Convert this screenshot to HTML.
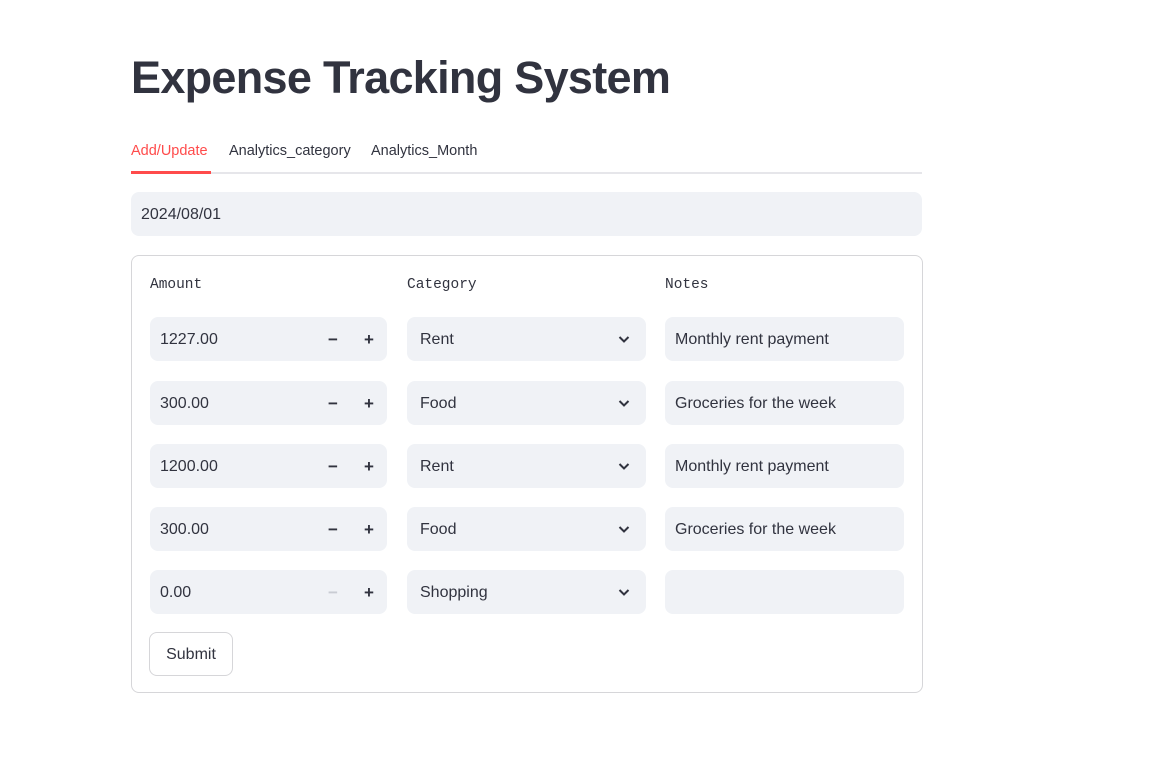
<!DOCTYPE html><html><head><style>
body{margin:0;background:#fff;width:1176px;height:776px;position:relative;font-family:"Liberation Sans",sans-serif;color:#31333f;overflow:hidden}
.a{position:absolute}
h1{position:absolute;left:131px;top:52px;margin:0;font-size:45px;font-weight:700;letter-spacing:-0.7px;color:#31333f}
.tab{position:absolute;top:143px;font-size:14.5px}
.in{position:absolute;background:#f0f2f6;border-radius:8px;height:44px;font-size:16px;line-height:46px;box-sizing:border-box;padding-left:10px}
.lbl{position:absolute;top:277px;font-family:"Liberation Mono",monospace;font-size:14.5px}
.pm{position:absolute;top:0;font-size:17px;font-weight:700}
</style></head><body>
<h1>Expense Tracking System</h1>
<div class="tab" style="left:131px;color:#ff4b4b">Add/Update</div>
<div class="tab" style="left:229px">Analytics_category</div>
<div class="tab" style="left:371px">Analytics_Month</div>
<div class="a" style="left:131px;top:172px;width:791px;height:2px;background:#e6e6ea"></div>
<div class="a" style="left:131px;top:171px;width:80px;height:3px;background:#ff4b4b"></div>
<div class="in" style="left:131px;top:192px;width:791px">2024/08/01</div>
<div class="a" style="left:131px;top:255px;width:790px;height:436px;border:1px solid #d6d6d9;border-radius:8px"></div>
<div class="lbl" style="left:150px">Amount</div>
<div class="lbl" style="left:407px">Category</div>
<div class="lbl" style="left:665px">Notes</div>
<div id="rows"></div>
<script>
var d=[["1227.00","Rent","Monthly rent payment"],["300.00","Food","Groceries for the week"],["1200.00","Rent","Monthly rent payment"],["300.00","Food","Groceries for the week"],["0.00","Shopping",""]];
var tops=[317,381,444,507,570],h="";
d.forEach(function(r,i){var t=tops[i];
h+='<div class="in" style="left:150px;top:'+t+'px;width:237px">'+r[0]+'<span class="pm" style="left:178px;color:'+(i==4?'#c9ccd3':'#31333f')+'">−</span><span class="pm" style="left:214px">+</span></div>';
h+='<div class="in" style="left:407px;top:'+t+'px;width:239px;padding-left:13px">'+r[1]+'<svg class="a" style="left:211px;top:18px" width="12" height="10" viewBox="0 0 12 10"><path d="M1.5 2l4.5 4.5 4.5-4.5" fill="none" stroke="#31333f" stroke-width="2"/></svg></div>';
h+='<div class="in" style="left:665px;top:'+t+'px;width:239px">'+r[2]+'</div>';});
document.getElementById('rows').innerHTML=h;
</script>
<div class="a" style="left:149px;top:632px;width:82px;height:42px;border:1px solid #d6d6d9;border-radius:8px;font-size:16px;line-height:44px;text-align:center">Submit</div>
</body></html>
